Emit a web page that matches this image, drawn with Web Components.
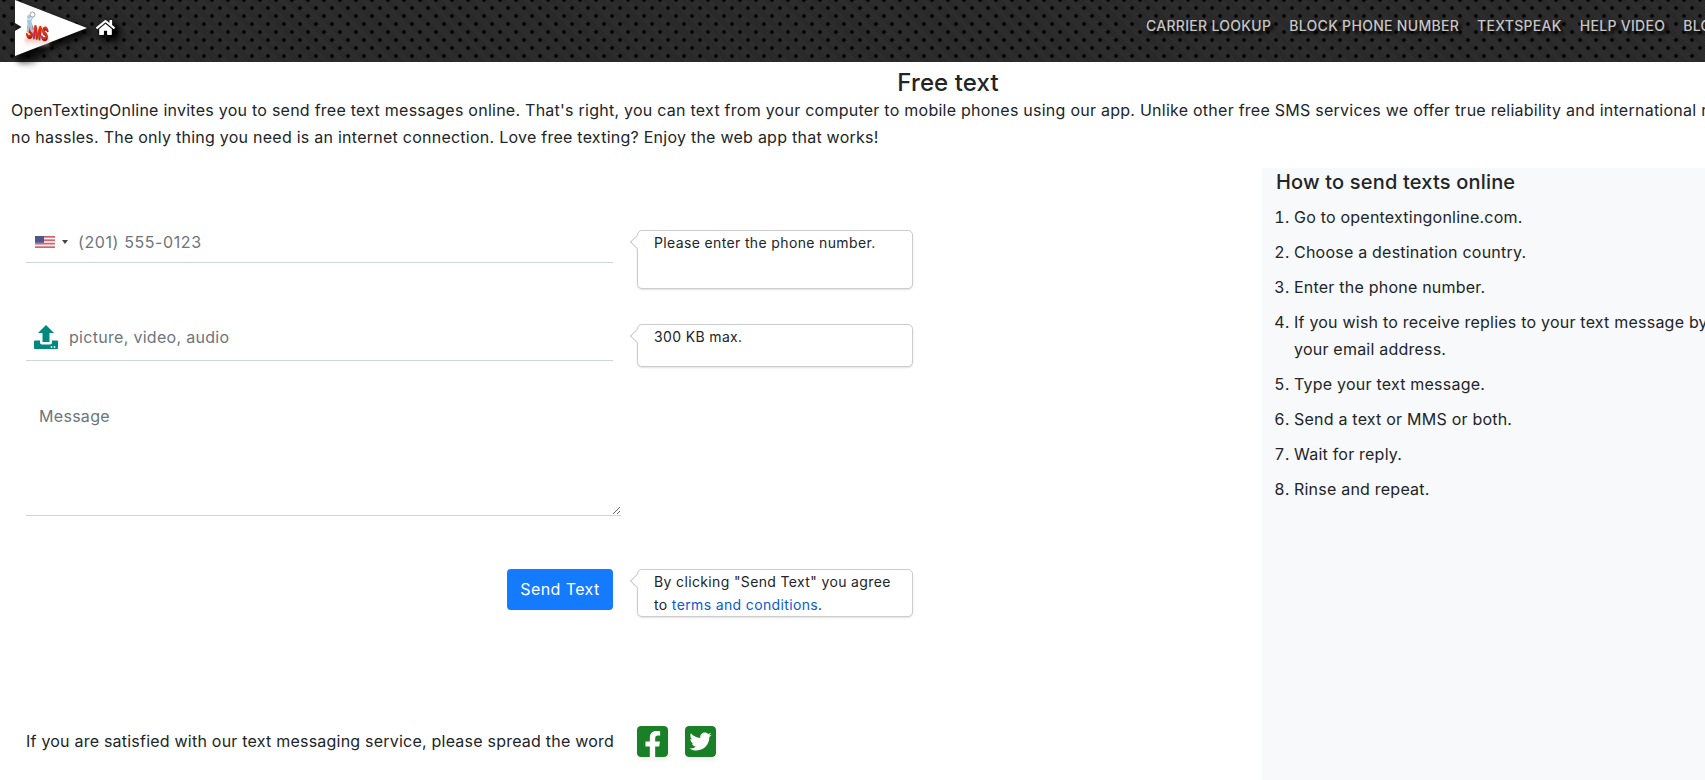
<!DOCTYPE html>
<html lang="en"><head><meta charset="utf-8"><title>Free text</title>
<style>
html,body{margin:0;padding:0;background:#fff;overflow:hidden;height:100%}
body{font:16px/24px Inter,"Liberation Sans",sans-serif;color:#212529;letter-spacing:.22px}
</style></head><body>
<text-page>
  <site-header>
    <a slot="links">CARRIER LOOKUP</a><a slot="links">BLOCK PHONE NUMBER</a><a slot="links">TEXTSPEAK</a><a slot="links">HELP VIDEO</a><a slot="links">BLOG</a>
  </site-header>
  <page-intro heading="Free text">OpenTextingOnline invites you to send free text messages online. That's right, you can text from your computer to mobile phones using our app. Unlike other free SMS services we offer true reliability and international reach with no hassles. The only thing you need is an internet connection. Love free texting? Enjoy the web app that works!</page-intro>
  <main-split>
    <text-form slot="main"></text-form>
    <how-to slot="side"></how-to>
  </main-split>
</text-page>
<script>
function def(name, css, html, init){
  customElements.define(name, class extends HTMLElement{
    constructor(){super();const r=this.attachShadow({mode:'open'});r.innerHTML='<style>'+css+'</style>'+(typeof html==='function'?html(this):html);}
    connectedCallback(){ if(init) init(this); }
  });
}
def('text-page',':host{display:flex;flex-direction:column;width:1896px;height:780px}','<slot></slot>');
def('site-header',`
:host{display:flex;position:relative;height:62px;flex:none;align-items:center;
 background-color:#2b2b2b;
 background-image:radial-gradient(circle at center,#000 1.2px,rgba(0,0,0,.3) 2px,transparent 2.7px),radial-gradient(circle at center,#000 1.2px,rgba(0,0,0,.3) 2px,transparent 2.7px),repeating-linear-gradient(45deg,#272727 0 1px,#2f2f2f 1px 2px);
 background-size:16px 16px,16px 16px,auto;background-position:-4px -8px,4px 0,0 0}
.logo{position:absolute;left:14px;top:0;width:76px;height:72px;overflow:visible}
.home{margin-left:96px;width:19px;height:17px;margin-top:-8px;flex:none;filter:drop-shadow(4px 4px 3px #000) drop-shadow(2px 2px 3px #000)}
nav{margin-left:1031px;display:flex;gap:18px;margin-top:-11px}
::slotted(a){color:#c6c6c6;font-size:14px;font-weight:500;letter-spacing:.3px;line-height:20px;white-space:nowrap;text-shadow:3px 3px 3px #000}
`,`
<svg class="logo" viewBox="0 0 76 72">
 <defs><filter id="b" x="-30%" y="-30%" width="160%" height="170%"><feGaussianBlur stdDeviation="3"/></filter>
 <filter id="s" x="-30%" y="-30%" width="160%" height="170%"><feGaussianBlur stdDeviation="1.500"/></filter>
 <linearGradient id="r" x1="0" y1="0" x2="0" y2="1"><stop offset="0" stop-color="#f0a89e"/><stop offset="1" stop-color="#fff" stop-opacity="0"/></linearGradient></defs>
 <path d="M4 44 L34 52 L18 64 H6Z" fill="#000" opacity=".38" filter="url(#b)"/>
 <path d="M4 4 L80 32 L4 62Z" fill="#000" opacity=".75" filter="url(#b)"/>
 <path d="M1 0 L73 28 L1 56 V31 L7.500 27 L1 23Z" fill="#fff"/>
 <rect x="11" y="38" width="24" height="10" fill="url(#r)" filter="url(#s)"/>
 <g transform="rotate(9 24 32)" font-family="Liberation Sans,sans-serif" font-weight="700" font-size="18">
  <text x="13" y="40" fill="#8f1a10" textLength="22" lengthAdjust="spacingAndGlyphs">SMS</text>
  <text x="12.500" y="39" fill="#a82014" textLength="22" lengthAdjust="spacingAndGlyphs">SMS</text>
  <text x="12" y="38" fill="#e3301e" textLength="22" lengthAdjust="spacingAndGlyphs">SMS</text></g>
 <g fill="#a9c6dc"><circle cx="15" cy="17" r="2"/><path d="M13 19.500h4l1.500 6 .5 6.500h-2l-1-5-1.500 5h-2l1-7z"/><path d="M16.500 20l1.800-3.500 1 .5-1.800 4z"/></g>
 <circle cx="18.500" cy="14.500" r="2.500" fill="#fff" stroke="#8aa3b5" stroke-width="1"/>
</svg>
<svg class="home" viewBox="0 0 576 512"><path fill="#fff" d="M280.37 148.26L96 300.11V464a16 16 0 0 0 16 16l112.06-.29a16 16 0 0 0 15.92-16V368a16 16 0 0 1 16-16h64a16 16 0 0 1 16 16v95.64a16 16 0 0 0 16 16.05L464 480a16 16 0 0 0 16-16V300L295.67 148.26a12.19 12.19 0 0 0-15.3 0zM571.6 251.47L488 182.56V44.05a12 12 0 0 0-12-12h-56a12 12 0 0 0-12 12v72.61L318.47 43a48 48 0 0 0-61 0L4.34 251.47a12 12 0 0 0-1.6 16.9l25.5 31A12 12 0 0 0 45.15 301l235.22-193.74a12.19 12.19 0 0 1 15.3 0L530.9 301a12 12 0 0 0 16.9-1.6l25.5-31a12 12 0 0 0-1.7-16.93z"/></svg>
<nav><slot name="links"></slot></nav>`);
def('page-intro',`
:host{display:block;padding:0 0 17px 0;margin-top:6px;width:1896px;box-sizing:border-box}
h1{margin:0;font-size:24px;line-height:29px;font-weight:500;text-align:center;letter-spacing:.1px}
p{margin:0;padding-left:11px;max-width:1785px;line-height:27px;letter-spacing:.25px}`,
h=>`<h1>${h.getAttribute('heading')}</h1><p><slot></slot></p>`);
def('main-split',`
:host{display:grid;grid-template-columns:1262px 1fr;flex:1;min-height:0}
.m{min-width:0}`,`<div class="m"><slot name="main"></slot></div><slot name="side"></slot>`);
def('hint-bubble',`
:host{display:block;position:relative;box-sizing:border-box;width:276px;margin-top:6px;height:var(--h,42px);padding-left:16px;
 border:1px solid #ccc;border-radius:5px;box-shadow:0 1px 2px rgba(0,0,0,.12);background:#fff;font-size:14px;line-height:23px;letter-spacing:.36px;color:#212529}
:host::before{content:"";position:absolute;left:-6px;top:6px;width:9px;height:9px;background:#fff;border-left:1px solid #ccc;border-bottom:1px solid #ccc;transform:rotate(45deg)}`,`<slot></slot>`);
def('phone-field',`
:host{display:flex;align-items:center;height:36px;padding-bottom:2px;border-bottom:1px solid #ced4da}
svg{width:20px;height:12px;margin-left:9px;flex:none}
i{width:0;height:0;border:3px solid transparent;border-top:4px solid #444;border-bottom:0;margin:0 10px 0 7px;flex:none}
input{border:0;outline:0;padding:0;background:none;font:inherit;letter-spacing:.6px;flex:1;min-width:0;color:#495057}
input::placeholder{color:#6c757d;opacity:1}`,`
<svg viewBox="0 0 20 12"><rect width="20" height="12" fill="#f3f3f5"/><g fill="#d4636e"><rect width="20" height="1.700"/><rect y="3.400" width="20" height="1.700"/><rect y="6.800" width="20" height="1.700"/><rect y="10.300" width="20" height="1.700"/></g><rect width="9" height="6.800" fill="#52558a"/></svg><i></i>
<input type="tel" placeholder="(201) 555-0123">`);
def('file-field',`
:host{display:flex;align-items:center;height:38px;padding-bottom:4px;border-bottom:1px solid #ced4da}
svg{width:24px;height:24px;margin-left:8px;margin-right:11px;flex:none}
input{border:0;outline:0;padding:0;background:none;font:inherit;letter-spacing:.3px;flex:1;min-width:0}
input::placeholder{color:#6c757d;opacity:1}`,`
<svg viewBox="0 0 24 24"><path fill="#00897f" d="M12 0l8 8h-4.500v9h-7V8H4z"/><path fill="#00897f" d="M1 15.500h5v2a2 2 0 0 0 2 2h8a2 2 0 0 0 2-2v-2h5a1 1 0 0 1 1 1V23a1 1 0 0 1-1 1H1a1 1 0 0 1-1-1v-6.500a1 1 0 0 1 1-1z"/><circle cx="17.500" cy="22" r=".9" fill="#fff"/><circle cx="20.500" cy="22" r=".9" fill="#fff"/></svg>
<input type="text" placeholder="picture, video, audio">`);
def('text-form',`
:host{display:block;padding:56px 0 0 26px}
.row{display:grid;grid-template-columns:587px 276px;column-gap:24px;align-items:start}
.r2{margin-top:29px}
textarea{display:block;box-sizing:border-box;width:595px;height:118px;margin-top:31px;padding:6px 13px;border:0;border-bottom:1px solid #ced4da;outline:0;font:inherit;letter-spacing:.3px;color:#495057;background:none}
textarea::placeholder{color:#6c757d;opacity:1}
.r3{margin-top:53px}
.r3 hint-bubble{margin-top:0}
button{justify-self:end;width:106px;height:41px;border:0;border-radius:4px;background:#147bff;color:#fff;font:inherit;font-size:16px;letter-spacing:.4px;padding:0 0 2px}
.share{display:flex;align-items:center;margin-top:108px;height:32px}
.share span{width:611px;flex:none}
.share svg{width:31px;height:31px;flex:none;margin-right:17px;border-radius:4px;box-shadow:0 3px 5px rgba(0,0,0,.06)}
`,`
<div class="row"><phone-field></phone-field><hint-bubble style="--h:59px">Please enter the phone number.</hint-bubble></div>
<div class="row r2"><file-field></file-field><hint-bubble style="--h:43px">300 KB max.</hint-bubble></div>
<textarea placeholder="Message"></textarea>
<div class="row r3"><button type="button">Send Text</button><hint-bubble style="--h:48px">By clicking "Send Text" you agree<br>to <a href="#" style="color:#0a5bd3;text-decoration:none">terms and conditions</a>.</hint-bubble></div>
<div class="share"><span>If you are satisfied with our text messaging service, please spread the word</span>
<svg viewBox="0 32 448 448"><path fill="#1a8027" d="M400 32H48A48 48 0 0 0 0 80v352a48 48 0 0 0 48 48h137.250V327.690h-63V256h63v-54.640c0-62.150 37-96.480 93.670-96.480 27.140 0 55.520 4.840 55.520 4.840v61h-31.270c-30.810 0-40.420 19.120-40.420 38.730V256h68.780l-11 71.690h-57.780V480H400a48 48 0 0 0 48-48V80a48 48 0 0 0-48-48z"/></svg>
<svg viewBox="0 32 448 448"><path fill="#1a8027" d="M400 32H48C21.500 32 0 53.500 0 80v352c0 26.500 21.500 48 48 48h352c26.500 0 48-21.500 48-48V80c0-26.500-21.500-48-48-48zm-48.900 158.800c.2 2.800.2 5.700.2 8.500 0 86.700-66 186.600-186.600 186.600-37.200 0-71.700-10.800-100.700-29.400 5.300.6 10.400.8 15.800.8 30.700 0 58.900-10.400 81.400-28-28.800-.6-53-19.500-61.300-45.500 10.100 1.500 19.200 1.500 29.600-1.200-30-6.100-52.500-32.500-52.500-64.400v-.8c8.700 4.900 18.900 7.900 29.600 8.300a65.447 65.447 0 0 1-29.200-54.600c0-12.200 3.200-23.400 8.900-33.100 32.300 39.800 80.800 65.800 135.200 68.600-9.300-44.500 24-80.600 64-80.600 18.900 0 35.900 7.900 47.900 20.700 14.800-2.800 29-8.300 41.600-15.800-4.900 15.200-15.100 28-28.600 36 13.100-1.400 25.800-5 37.600-10.100-8.900 13.100-20.100 24.700-32.900 34z"/></svg></div>`);
def('how-to',`
:host{display:block;background:#f8f9fa;padding:1px 14px 0;min-height:100%;box-sizing:border-box}
h2{margin:0 0 8px;font-size:20px;line-height:27px;font-weight:500;letter-spacing:.18px}
ol{margin:0;padding:0 50px 0 18px}
li{line-height:27px;margin-bottom:8px}`,`
<h2>How to send texts online</h2>
<ol><li>Go to opentextingonline.com.</li><li>Choose a destination country.</li><li>Enter the phone number.</li><li>If you wish to receive replies to your text message by email, enter your email address.</li><li>Type your text message.</li><li>Send a text or MMS or both.</li><li>Wait for reply.</li><li>Rinse and repeat.</li></ol>`);
</script>
</body></html>
